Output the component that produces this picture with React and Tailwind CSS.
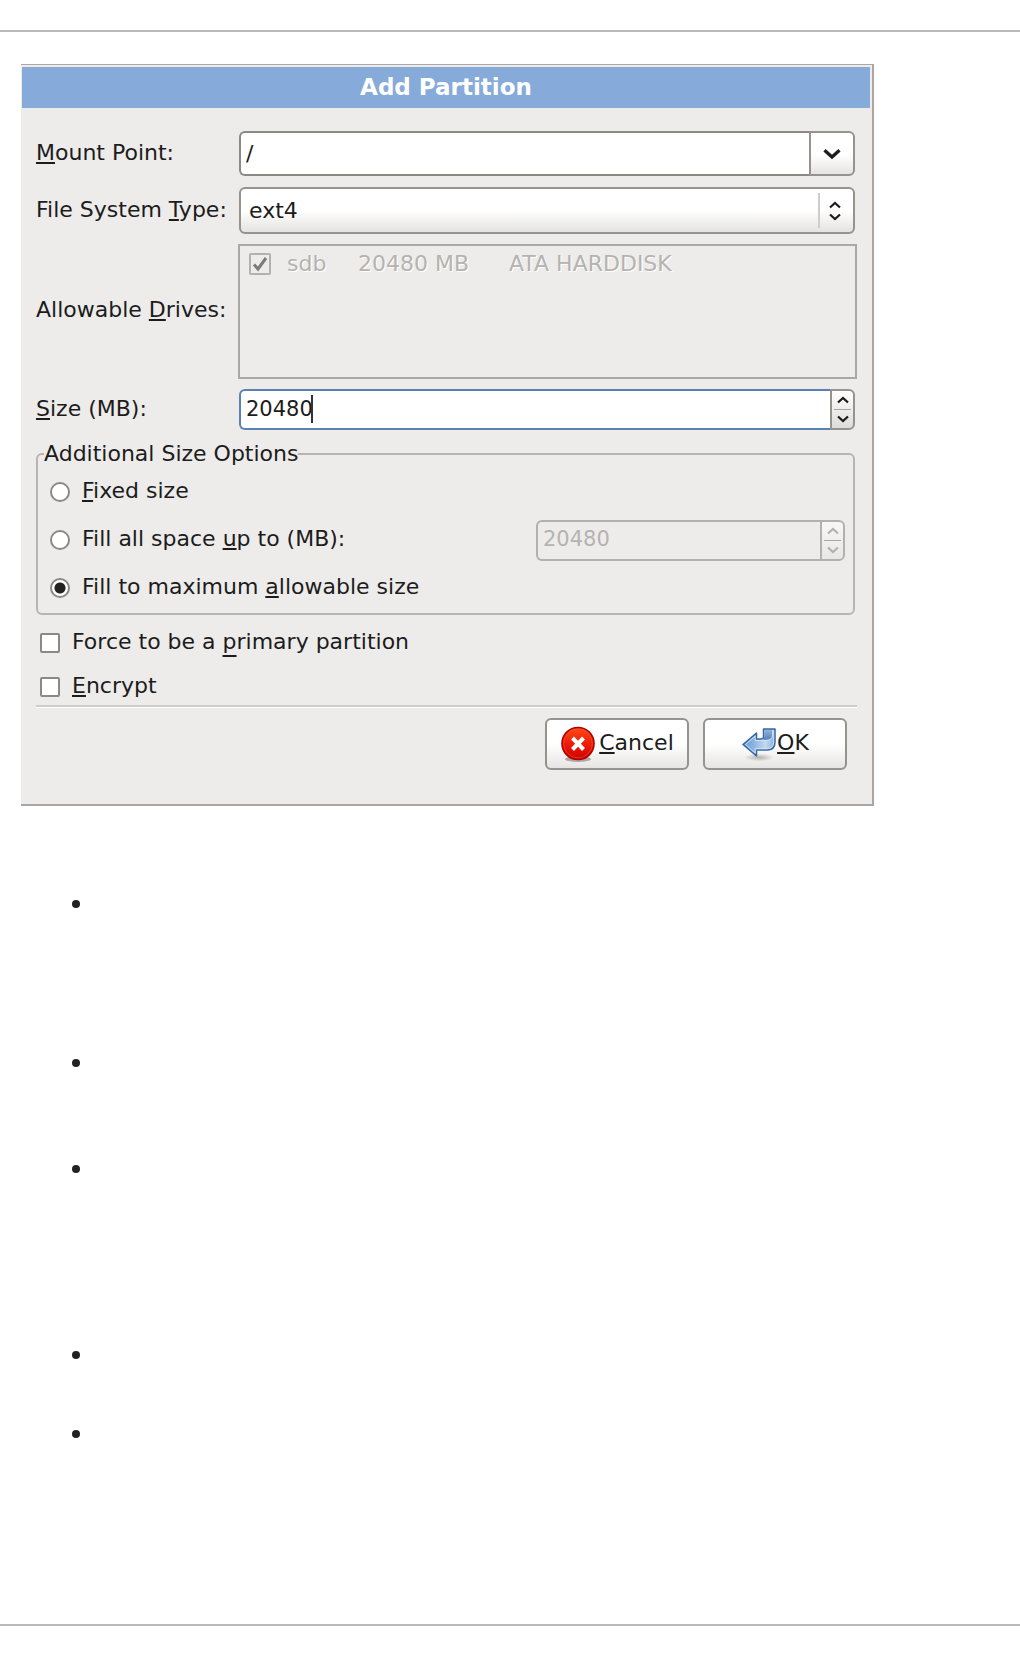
import { useState } from "react";

const Key = ({ children, low }) => (
  <span
    className={`underline decoration-2 [text-decoration-skip-ink:none] ${
      low ? "underline-offset-6" : "underline-offset-2"
    }`}
  >
    {children}
  </span>
);

const Chevron = ({ up, className }) => (
  <svg viewBox="0 0 12 8" className={className} aria-hidden="true">
    <path
      d={up ? "M1 6.5 L6 2 L11 6.5" : "M1 1.5 L6 6 L11 1.5"}
      fill="none"
      stroke="currentColor"
      strokeWidth="2.2"
    />
  </svg>
);

const CancelIcon = () => (
  <svg viewBox="0 0 36 36" className="size-9" aria-hidden="true">
    <defs>
      <linearGradient id="stopFill" x1="0" y1="0" x2="0" y2="1">
        <stop offset="0" stopColor="#ff4a14" />
        <stop offset="0.5" stopColor="#ee1d0a" />
        <stop offset="1" stopColor="#cc0000" />
      </linearGradient>
    </defs>
    <ellipse cx="18" cy="33" rx="13" ry="3" fill="#8f8c89" opacity="0.7" />
    <circle cx="18" cy="17.5" r="16" fill="url(#stopFill)" stroke="#b20000" strokeWidth="1.6" />
    <circle cx="18" cy="17.5" r="14.4" fill="none" stroke="#f25436" strokeWidth="1" opacity="0.6" />
    <path d="M12.5 12 L23.5 23.5 M23.5 12 L12.5 23.5" stroke="#fff" strokeWidth="4" />
  </svg>
);

const OkIcon = () => (
  <svg viewBox="0 0 36 36" className="size-9" aria-hidden="true">
    <defs>
      <linearGradient id="arrowFill" x1="0" y1="0" x2="1" y2="0">
        <stop offset="0" stopColor="#6496cf" />
        <stop offset="0.35" stopColor="#8fb5e0" />
        <stop offset="0.7" stopColor="#c3daf1" />
        <stop offset="1" stopColor="#86aedb" />
      </linearGradient>
      <linearGradient id="curlFill" x1="0" y1="0" x2="0" y2="1">
        <stop offset="0" stopColor="#8db3de" />
        <stop offset="1" stopColor="#4f82bd" />
      </linearGradient>
      <radialGradient id="arrowShadow">
        <stop offset="0" stopColor="#b5b3b0" />
        <stop offset="1" stopColor="#b5b3b0" stopOpacity="0" />
      </radialGradient>
    </defs>
    <ellipse cx="18" cy="31.5" rx="15" ry="4" fill="url(#arrowShadow)" />
    <path
      d="M2 18.5 L15.5 7 V13 H20 Q22.5 13 22.5 11 V3 H34 V16 Q34 24 26 24 H15.5 V30 Z"
      fill="url(#arrowFill)"
      stroke="#3566a4"
      strokeWidth="1.5"
      strokeLinejoin="round"
    />
    <path d="M23.5 4 H31 V11 Q30 14 24 14 L22 13.5 Q23.5 12 23.5 10 Z" fill="url(#curlFill)" />
    <path
      d="M4.5 18.5 L14.2 10.2 V14.5 H24 Q31.500 14.500 31.500 9 V4.500 H32.700 V16 Q32.700 22.700 26 22.700 H14.200 V27 Z"
      fill="none"
      stroke="#dbe9f7"
      strokeWidth="1"
      opacity="0.8"
    />
  </svg>
);

const SpinButtons = ({ disabled, onStep }) => (
  <div
    className={`flex w-[25px] shrink-0 flex-col rounded-r-md border-2 px-[2px] ${
      disabled
        ? "border-[#b3b1ae] bg-linear-to-b from-[#f7f7f6] to-[#e8e7e5] text-[#b3b1ae]"
        : "border-[#96928e] bg-linear-to-b from-white to-[#dddcda] text-[#1a1a1a]"
    }`}
  >
    <button
      type="button"
      aria-label="Increase"
      disabled={disabled}
      onClick={() => onStep(1)}
      className="flex flex-1 items-center justify-center border-b border-[#aaa7a3]"
    >
      <Chevron up className="h-2 w-3" />
    </button>
    <button
      type="button"
      aria-label="Decrease"
      disabled={disabled}
      onClick={() => onStep(-1)}
      className="flex flex-1 items-center justify-center"
    >
      <Chevron className="h-2 w-3" />
    </button>
  </div>
);

const radioClass =
  "size-5 shrink-0 appearance-none rounded-full border-2 border-[#8c8984] bg-white checked:bg-[radial-gradient(circle,#222_0,#222_5px,#fff_6px)]";
const checkClass =
  "size-5 shrink-0 appearance-none rounded-xs border-2 border-[#8c8984] bg-white";
const buttonClass =
  "flex h-[52px] w-36 items-center justify-center rounded-md border-2 border-[#96928e] bg-linear-to-b from-white from-50% to-[#e6e5e3]";

const App = () => {
  const [mountPoint, setMountPoint] = useState("/");
  const [size, setSize] = useState(20480);
  const [sizeOption, setSizeOption] = useState("max");

  return (
    <div className="flex min-h-screen flex-col bg-white font-['DejaVu_Sans',sans-serif] text-[22px] leading-7 text-[#1c1c1c]">
      <hr className="mt-[30px] border-t-2 border-[#b9b9b9]" />

      <main className="flex-1 px-[21px] pt-8">
        <form
          className="w-full max-w-[853px] border-t border-r-2 border-b-2 border-[#aba6a1] bg-[#edeceb] pt-[2px] pb-[34px]"
          onSubmit={(e) => e.preventDefault()}
        >
          <h1 className="mr-[2px] ml-px flex h-[41px] items-center justify-center bg-[#86aad9] pb-[2px] text-[23px] font-bold text-white">
            Add Partition
          </h1>

          <div className="pr-[15px] pl-[15px]">
            <div className="mt-[23px] grid grid-cols-[202px_1fr] items-center gap-y-[10px]">
              <label htmlFor="mountPoint" className="pb-[2px]">
                <Key>M</Key>ount Point:
              </label>
              <div className="mr-[2px] ml-px flex h-[45px]">
                <input
                  id="mountPoint"
                  type="text"
                  value={mountPoint}
                  onChange={(e) => setMountPoint(e.target.value)}
                  className="min-w-0 flex-1 rounded-l-md border-2 border-r-0 border-[#8c8984] bg-white px-[5px]"
                />
                <button
                  type="button"
                  aria-label="Show mount points"
                  className="flex w-[46px] items-center justify-center rounded-r-md border-2 border-[#96928e] bg-linear-to-b from-white from-50% to-[#e6e5e3]"
                >
                  <Chevron className="h-3 w-[18px]" />
                </button>
              </div>

              <label htmlFor="fsType" className="whitespace-nowrap">
                File System <Key>T</Key>ype:
              </label>
              <div className="relative mt-px mr-[2px] ml-px">
                <select
                  id="fsType"
                  className="block h-[47px] w-full appearance-none rounded-md border-2 border-[#96928e] bg-linear-to-b from-white from-50% to-[#e4e3e1] px-2"
                >
                  <option>ext4</option>
                </select>
                <div className="pointer-events-none absolute inset-y-[6px] right-[14px] flex flex-col justify-center gap-1 border-l-2 border-[#cfcdca] pl-[9px]">
                  <Chevron up className="h-2 w-3" />
                  <Chevron className="h-2 w-3" />
                </div>
              </div>

              <span className="pb-1">
                Allowable <Key>D</Key>rives:
              </span>
              <div className="h-[135px] border-2 border-[#aaa8a5] px-[9px] pt-[4px] text-[#b5b3b0] [text-shadow:1px_1px_0_#fff]">
                <label className="flex items-center">
                  <span className="relative mr-4 flex">
                    <input
                      type="checkbox"
                      checked
                      disabled
                      readOnly
                      className="size-[22px] appearance-none rounded-xs border-2 border-[#b3b1ae]"
                    />
                    <svg viewBox="0 0 22 22" className="absolute inset-0 size-[22px]" aria-hidden="true">
                      <path d="M5 11.5 L9 16 L17 5" fill="none" stroke="#7d7b78" strokeWidth="3" />
                    </svg>
                  </span>
                  <span className="w-[71px]">sdb</span>
                  <span className="w-[151px]">20480 MB</span>
                  <span>ATA HARDDISK</span>
                </label>
              </div>

              <label htmlFor="size" className="pb-[2px]">
                <Key>S</Key>ize (MB):
              </label>
              <div className="relative mr-[2px] ml-px flex h-[41px]">
                <input
                  id="size"
                  type="text"
                  inputMode="numeric"
                  value={size}
                  onChange={(e) => setSize(Number(e.target.value.replace(/\D/g, "")))}
                  className="min-w-0 flex-1 rounded-l-md border-2 border-r-0 border-[#5b80b2] bg-white px-[5px] pb-[2px] text-[21px]"
                />
                <span className="absolute top-[6px] left-[72px] h-7 w-[2px] bg-[#333]" />
                <SpinButtons onStep={(step) => setSize(size + step)} />
              </div>
            </div>

            <fieldset className="mt-[10px] mr-[2px] rounded-md border-2 border-[#b7b5b2] px-[12px] pt-[3px] pb-1">
              <legend className="-ml-[6px]">Additional Size Options</legend>
              <label className="flex h-[42px] items-center gap-3">
                <input
                  type="radio"
                  name="sizeOption"
                  checked={sizeOption === "fixed"}
                  onChange={() => setSizeOption("fixed")}
                  className={radioClass}
                />
                <span className="pb-[2px]">
                  <Key>F</Key>ixed size
                </span>
              </label>
              <div className="flex h-[54px] items-center justify-between">
                <label className="flex items-center gap-3">
                  <input
                    type="radio"
                    name="sizeOption"
                    checked={sizeOption === "upTo"}
                    onChange={() => setSizeOption("upTo")}
                    className={radioClass}
                  />
                  <span className="pb-[2px]">
                    Fill all space <Key>u</Key>p to (MB):
                  </span>
                </label>
                <div className="-mr-[4px] flex h-[41px] w-[309px]">
                  <input
                    type="text"
                    aria-label="Fill all space up to (MB)"
                    value="20480"
                    readOnly
                    disabled
                    className="min-w-0 flex-1 rounded-l-md border-2 border-r-0 border-[#b3b1ae] px-[5px] pb-[2px] text-[21px] text-[#b5b3b0]"
                  />
                  <SpinButtons disabled />
                </div>
              </div>
              <label className="flex h-[42px] items-center gap-3">
                <input
                  type="radio"
                  name="sizeOption"
                  checked={sizeOption === "max"}
                  onChange={() => setSizeOption("max")}
                  className={radioClass}
                />
                <span className="pb-[2px]">
                  Fill to maximum <Key>a</Key>llowable size
                </span>
              </label>
            </fieldset>

            <div className="mt-[10px] flex flex-col gap-2 border-b-2 border-[#cfcdca] pl-1 shadow-[0_1px_0_#fff]">
              <label className="flex h-9 items-center gap-3">
                <input type="checkbox" className={checkClass} />
                <span className="pb-[2px]">
                  Force to be a <Key low>p</Key>rimary partition
                </span>
              </label>
              <label className="flex h-9 items-center gap-3">
                <input type="checkbox" className={checkClass} />
                <span className="pb-[2px]">
                  <Key>E</Key>ncrypt
                </span>
              </label>
            </div>

            <div className="mt-[11px] mr-[10px] flex justify-end gap-[14px]">
              <button type="button" className={buttonClass}>
                <CancelIcon />
                <span className="ml-[3px] pb-[2px]">
                  <Key>C</Key>ancel
                </span>
              </button>
              <button type="submit" className={buttonClass}>
                <OkIcon />
                <span className="pb-[2px]">
                  <Key>O</Key>K
                </span>
              </button>
            </div>
          </div>
        </form>

        <ul className="mt-[94px] ml-[51px]">
          <li className="h-[159px]">
            <span className="block size-2 rounded-full bg-[#222]" />
          </li>
          <li className="h-[106px]">
            <span className="block size-2 rounded-full bg-[#222]" />
          </li>
          <li className="h-[186px]">
            <span className="block size-2 rounded-full bg-[#222]" />
          </li>
          <li className="h-[79px]">
            <span className="block size-2 rounded-full bg-[#222]" />
          </li>
          <li>
            <span className="block size-2 rounded-full bg-[#222]" />
          </li>
        </ul>
      </main>

      <hr className="mb-[30px] border-t-2 border-[#b9b9b9]" />
    </div>
  );
};

export default App;
